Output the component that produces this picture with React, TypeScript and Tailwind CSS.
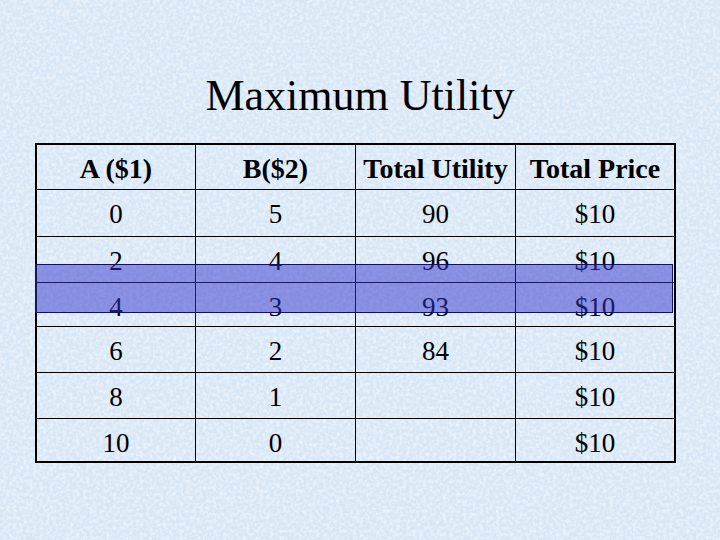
import React from "react";

const rows: [string, string, string, string][] = [
  ["0", "5", "90", "$10"],
  ["2", "4", "96", "$10"],
  ["4", "3", "93", "$10"],
  ["6", "2", "84", "$10"],
  ["8", "1", "", "$10"],
  ["10", "0", "", "$10"],
];

const rowHeights = ["h-[47px]", "h-[46px]", "h-[44px]", "h-[46px]", "h-[46px]", "h-[43px]"];
const colW = ["w-[159px]", "w-[160px]", "w-[160px]", "w-[158px]"];

function Background() {
  return (
    <svg className="absolute inset-0 w-full h-full" width="720" height="540">
      <defs>
        <filter id="tex" x="0" y="0" width="100%" height="100%">
          <feTurbulence type="fractalNoise" baseFrequency="0.3" numOctaves="3" seed="7" result="n" />
          <feColorMatrix
            in="n"
            type="matrix"
            values="0 0 0 0 1  0 0 0 0 1  0 0 0 0 1  0 0 0 -2.4 1.5"
          />
        </filter>
      </defs>
      <rect width="720" height="540" fill="#d8e7f6" />
      <rect width="720" height="540" filter="url(#tex)" opacity="0.5" />
    </svg>
  );
}

export default function App() {
  return (
    <div className="relative w-[720px] h-[540px] overflow-hidden bg-[#d9e7f6] font-['Liberation_Serif',serif] text-black">
      <Background />
      <div className="relative flex flex-col">
        <h1 className="mt-[70px] h-[52px] text-center text-[44px] leading-[52px] font-normal">
          Maximum Utility
        </h1>
        <div className="ml-[35px] mt-[21px] w-[641px] border-2 border-black">
          <div className="flex h-[44px] text-[28px] leading-[32px] font-bold">
            {["A ($1)", "B($2)", "Total Utility", "Total Price"].map((h, i) => (
              <div
                key={i}
                className={`${colW[i]} h-full pt-[8px] text-center whitespace-nowrap ${i < 3 ? "border-r border-black" : ""}`}
              >
                {h}
              </div>
            ))}
          </div>
          {rows.map((r, ri) => (
            <div key={ri} className={`flex ${rowHeights[ri]} border-t border-black text-[27px] leading-[32px]`}>
              {r.map((c, ci) => (
                <div
                  key={ci}
                  className={`${colW[ci]} h-full pt-[8px] text-center ${ci < 3 ? "border-r border-black" : ""}`}
                >
                  {c}
                </div>
              ))}
            </div>
          ))}
        </div>
      </div>
      <div className="absolute left-[35px] top-[264px] w-[638px] h-[49px] border border-[#10106a] bg-[#3333cc]/50" />
    </div>
  );
}
